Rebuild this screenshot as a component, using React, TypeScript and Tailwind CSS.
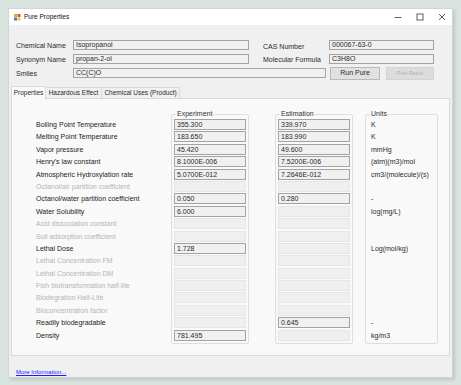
type Row = {
  label: string
  exp?: string
  est?: string
  unit?: string
  off?: boolean
}

const rows: Row[] = [
  { label: 'Boiling Point Temperature', exp: '355.300', est: '339.970', unit: 'K' },
  { label: 'Melting Point Temperature', exp: '183.650', est: '183.990', unit: 'K' },
  { label: 'Vapor pressure', exp: '45.420', est: '49.600', unit: 'mmHg' },
  { label: "Henry's law constant", exp: '8.1000E-006', est: '7.5200E-006', unit: '(atm)(m3)/mol' },
  { label: 'Atmospheric Hydroxylation rate', exp: '5.0700E-012', est: '7.2646E-012', unit: 'cm3/(molecule)/(s)' },
  { label: 'Octanol/air partition coefficient', off: true },
  { label: 'Octanol/water partition coefficient', exp: '0.050', est: '0.280', unit: '-' },
  { label: 'Water Solubility', exp: '6.000', unit: 'log(mg/L)' },
  { label: 'Acid dissociation constant', off: true },
  { label: 'Soil adsorption coefficient', off: true },
  { label: 'Lethal Dose', exp: '1.728', unit: 'Log(mol/kg)' },
  { label: 'Lethal Concentration FM', off: true },
  { label: 'Lethal Concentration DM', off: true },
  { label: 'Fish biotransformation half-life', off: true },
  { label: 'Biodegration Half-Life', off: true },
  { label: 'Bioconcentration factor', off: true },
  { label: 'Readily biodegradable', est: '0.645', unit: '-' },
  { label: 'Density', exp: '781.495', unit: 'kg/m3' }
]

function ValueBox({ value }: { value?: string }) {
  return (
    <div className="h-[12.4px] flex items-start">
      {value ? (
        <div className="w-full h-[11px] border border-[#a3a3a3] bg-[#f0f0f0] pl-[2px] leading-[9px] text-[#2a2a2a]">
          {value}
        </div>
      ) : (
        <div className="w-full h-[11px] border border-[#e6e6e6] bg-[#efefef]" />
      )}
    </div>
  )
}

function Group({ title, children, width }: { title: string; children: React.ReactNode; width: string }) {
  return (
    <fieldset className={`${width} self-start border border-[#dedede] rounded-[2px] px-[2px] pt-[1px] pb-[1px]`}>
      <legend className="ml-[2px] px-[1px] leading-[8px] text-[#333]">{title}</legend>
      {children}
    </fieldset>
  )
}

function TopInput({ value, width }: { value: string; width: string }) {
  return (
    <div className={`${width} mt-[2px] h-[10px] border border-[#a3a3a3] bg-[#f0f0f0] pl-[2px] leading-[8px] text-[#2a2a2a]`}>
      {value}
    </div>
  )
}

function App() {
  return (
    <div
      className="w-[461px] h-[385px] bg-[#d9e4df] pt-[8px] pl-[8px] text-[7px] overflow-hidden"
      style={{ fontFamily: '"Liberation Sans", Arial, sans-serif' }}
    >
      <div className="w-[445px] h-[370px] flex flex-col bg-[#f0f0f0] border border-[#cfd6d3] shadow-[2px_2px_3px_rgba(0,0,0,0.12)]">
        {/* title bar */}
        <div className="h-[16px] bg-white flex items-center pl-[5px] pr-[6px] shrink-0">
          <svg width="7" height="7" viewBox="0 0 7 7">
            <rect x="0" y="0" width="3" height="3" fill="#e8a23a" />
            <rect x="3.5" y="0" width="3" height="3" fill="#d4572f" />
            <rect x="0" y="3.5" width="3" height="3" fill="#3c7dc4" />
            <rect x="3.5" y="3.5" width="3" height="3" fill="#f2c34c" />
          </svg>
          <span className="ml-[3px] text-[#111] text-[6.5px]">Pure Properties</span>
          <div className="ml-auto flex items-center gap-[14px] text-[#333]">
            <svg width="8" height="8" viewBox="0 0 8 8">
              <line x1="0.5" y1="4.5" x2="7.5" y2="4.5" stroke="#333" strokeWidth="0.8" />
            </svg>
            <svg width="8" height="8" viewBox="0 0 8 8">
              <rect x="1" y="1" width="6" height="6" fill="none" stroke="#333" strokeWidth="0.8" />
            </svg>
            <svg width="8" height="8" viewBox="0 0 8 8">
              <path d="M1 1 L7 7 M7 1 L1 7" stroke="#333" strokeWidth="0.8" />
            </svg>
          </div>
        </div>

        {/* header fields */}
        <div className="pt-[13px] pl-[7px] flex flex-col">
          <div className="h-[14px] flex items-start">
            <div className="w-[57px] mt-[3px] text-[#2a2a2a]">Chemical Name</div>
            <TopInput value="Isopropanol" width="w-[176px]" />
            <div className="w-[66px] ml-[14px] mt-[4px] text-[#2a2a2a]">CAS Number</div>
            <TopInput value="000067-63-0" width="w-[105px]" />
          </div>
          <div className="h-[14px] flex items-start">
            <div className="w-[57px] mt-[3px] text-[#2a2a2a]">Synonym Name</div>
            <TopInput value="propan-2-ol" width="w-[176px]" />
            <div className="w-[66px] ml-[14px] mt-[3px] text-[#2a2a2a]">Molecular Formula</div>
            <TopInput value="C3H8O" width="w-[105px]" />
          </div>
          <div className="h-[14px] flex items-start">
            <div className="w-[57px] mt-[3px] text-[#2a2a2a]">Smiles</div>
            <TopInput value="CC(C)O" width="w-[253px]" />
            <button className="ml-[4px] mt-[1px] w-[50px] h-[13px] border border-[#b9b9b9] bg-[#e1e1e1] text-[#2a2a2a] text-[7px]">
              Run Pure
            </button>
            <button className="ml-[6px] mt-[1px] w-[48px] h-[13px] border border-[#d3d3d3] bg-[#dcdcdc] text-[#b0b0b0] text-[5px]">
              Pure Result
            </button>
          </div>
        </div>

        {/* tabs */}
        <div className="mt-[5px] ml-[2px] flex items-end h-[13px]">
          <div className="w-[35px] h-[13px] border border-b-0 border-[#d9d9d9] bg-[#f9f9f9] flex items-center justify-center text-[6.5px] text-[#2a2a2a] relative top-[1px]">
            Properties
          </div>
          <div className="w-[56px] h-[11px] border border-l-0 border-b-0 border-[#d9d9d9] bg-[#f0f0f0] flex items-center justify-center text-[6.5px] text-[#2a2a2a]">
            Hazardous Effect
          </div>
          <div className="w-[78px] h-[11px] border border-l-0 border-b-0 border-[#d9d9d9] bg-[#f0f0f0] flex items-center justify-center text-[6.5px] text-[#2a2a2a]">
            Chemical Uses (Product)
          </div>
        </div>

        {/* tab panel */}
        <div className="mx-[2px] h-[258px] border border-[#d9d9d9] bg-[#f9f9f9] pt-[11px] flex items-start">
          <div className="w-[159px] pl-[24px] mt-[9px] flex flex-col">
            {rows.map((r) => (
              <div
                key={r.label}
                className={`h-[12.4px] leading-[12px] whitespace-nowrap ${r.off ? 'text-[#b5b5b5]' : 'text-[#1c1c1c]'}`}
              >
                {r.label}
              </div>
            ))}
          </div>
          <Group title="Experiment" width="w-[78px]">
            {rows.map((r) => (
              <ValueBox key={r.label} value={r.exp} />
            ))}
          </Group>
          <div className="w-[26px]" />
          <Group title="Estimation" width="w-[78px]">
            {rows.map((r) => (
              <ValueBox key={r.label} value={r.est} />
            ))}
          </Group>
          <div className="w-[12px]" />
          <Group title="Units" width="w-[73px]">
            {rows.map((r) => (
              <div key={r.label} className="h-[12.4px] leading-[12px] pl-[3px] whitespace-nowrap text-[#2a2a2a]">
                {r.unit ?? ''}
              </div>
            ))}
          </Group>
        </div>

        {/* footer */}
        <div className="pl-[7px] pt-[11px]">
          <span className="text-[6px] text-[#1a1aff] underline">More Information...</span>
        </div>
      </div>
    </div>
  )
}

export default App
